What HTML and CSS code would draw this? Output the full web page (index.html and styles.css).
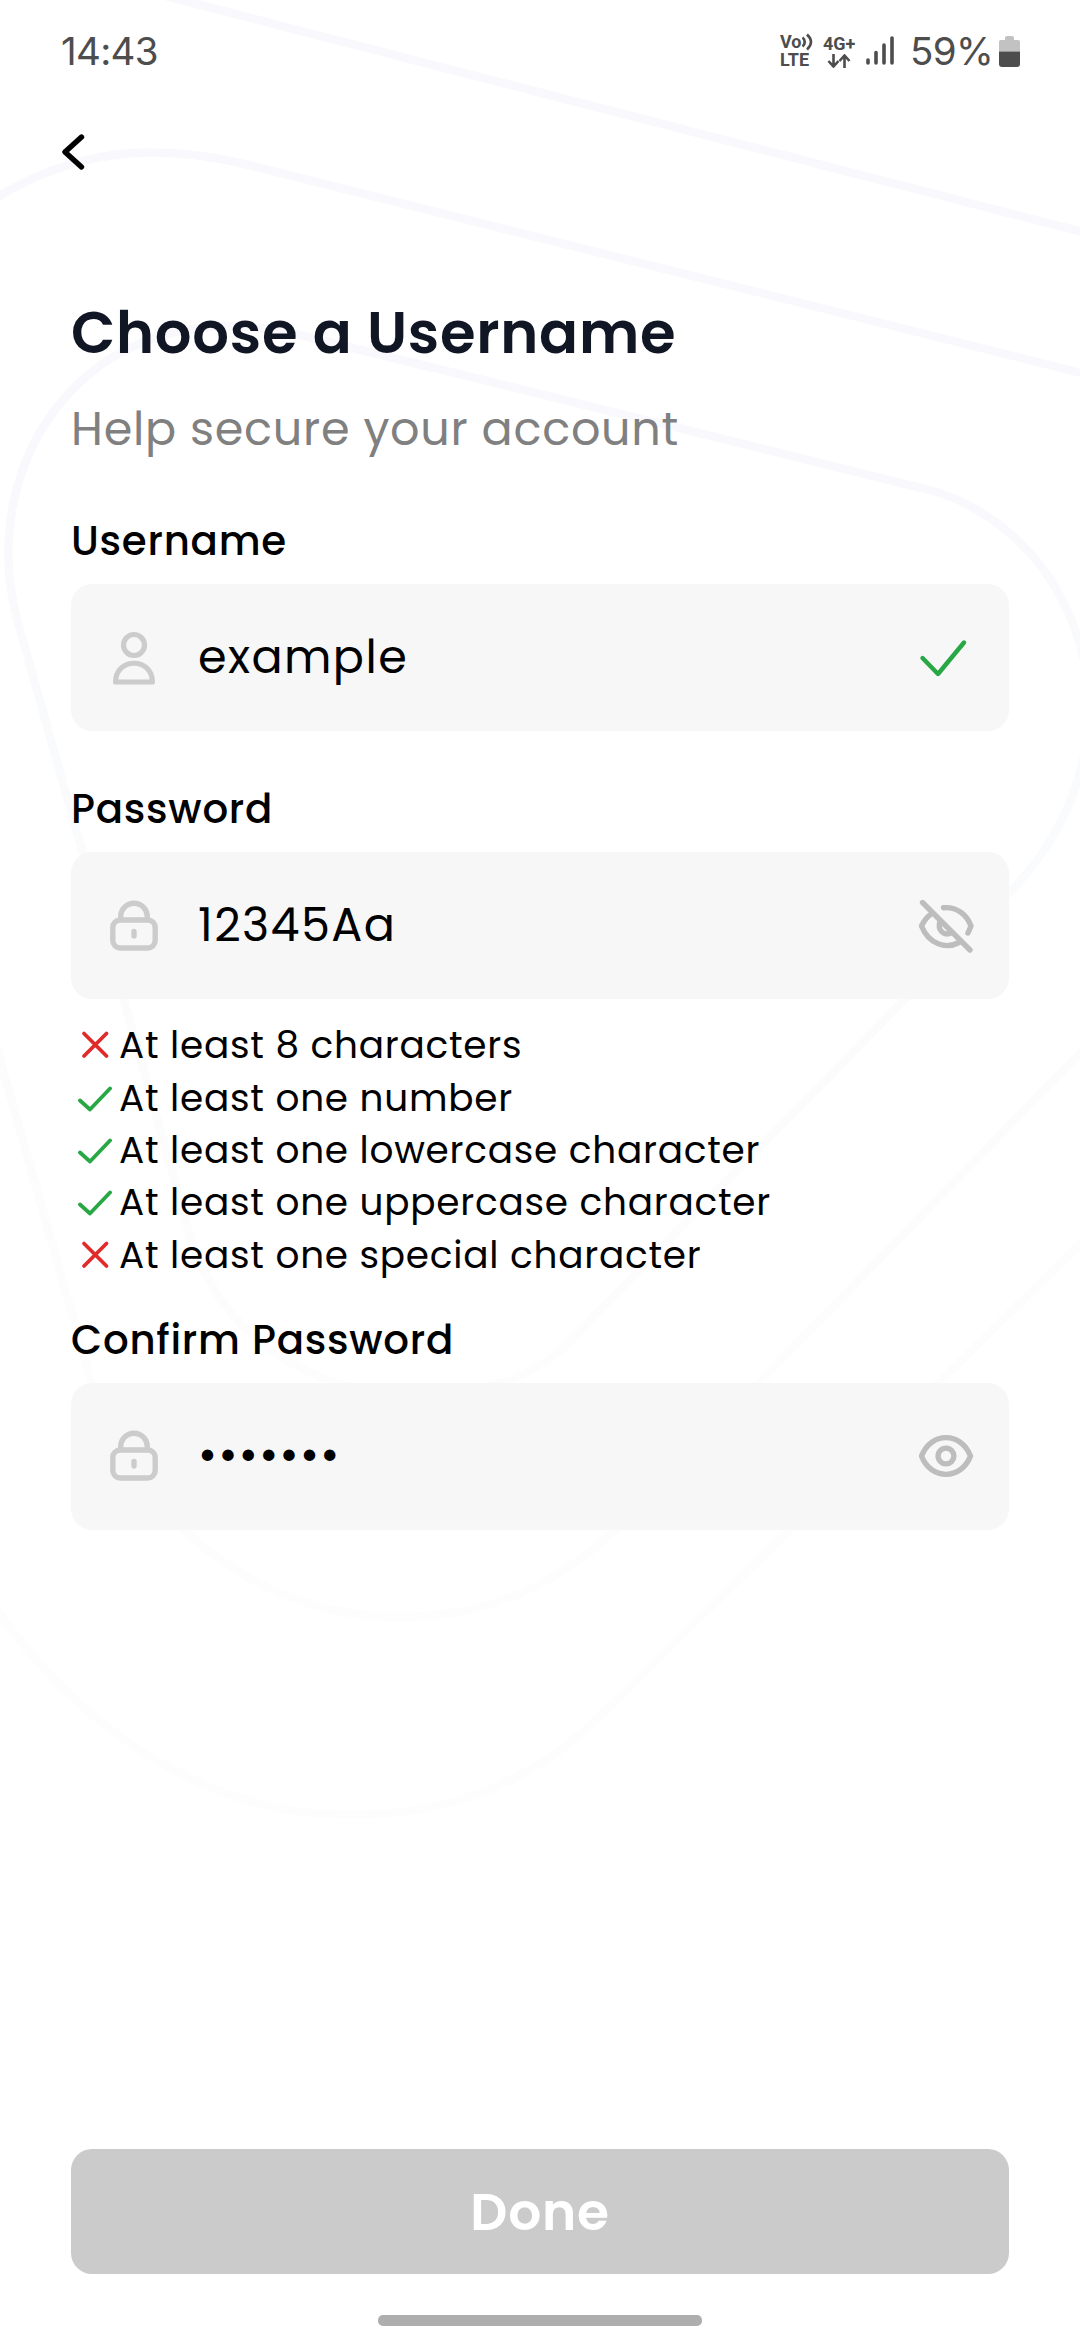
FILE: index.html
```html
<!DOCTYPE html>
<html lang="en">
<head>
<meta charset="utf-8">
<title>Choose a Username</title>
<link rel="stylesheet" href="styles.css">
</head>
<body>
<svg class="backdrop" viewBox="0 0 1080 2340" fill="none" stroke="url(#fade)" stroke-width="8.5">
  <defs>
    <linearGradient id="fade" gradientUnits="userSpaceOnUse" x1="0" y1="0" x2="0" y2="1830">
      <stop offset="0" stop-color="#f8f8fd"/><stop offset=".25" stop-color="#f9f9fd"/>
      <stop offset=".45" stop-color="#fafbfc"/><stop offset=".65" stop-color="#fcfcfc"/>
      <stop offset=".8" stop-color="#fdfdfd"/><stop offset="1" stop-color="#fdfdfd"/>
    </linearGradient>
  </defs>
  <path d="M165-4L1090 234"/>
  <path d="M-4 198C75 150 150 143 240 163L1090 375"/>
  <path d="M-4 1045L90 1378C140 1530 265 1617 399 1617C500 1617 570 1575 620 1525L1084 1049"/>
  <path d="M-4 1609C90 1740 215 1815 351 1815C460 1815 540 1775 600 1716L1084 1240"/>
  <path d="M930 490C992 507 1040 555 1062 600C1115 700 1085 815 1012 890L558 1353C460 1430 240 1410 189 1232L17 619C-25 460 90 285 300 335Z"/>
</svg>
<div class="screen">
  <header class="status">
    <span class="clock">14:43</span>
    <div class="status-icons">
      <div class="volte"><span class="volte-top">Vo<svg width="13" height="18" viewBox="0 0 13 18" fill="none" stroke="#4d4d4d" stroke-width="2.6"><path d="M0.500 4.500q4.500 4.500 0 9M5 1.500q8 7.500 0 15"/></svg></span><span>LTE</span></div>
      <div class="network"><span>4G+</span><svg width="24" height="14" viewBox="0 0 24 14" fill="none" stroke="#4d4d4d" stroke-width="2.6"><path d="M6.500 0v12M1.500 7l5 5.500 5-5.500M17.500 14V2M12.500 7l5-5.500 5 5.500"/></svg></div>
      <svg class="signal" width="30" height="32" viewBox="0 0 30 32" stroke="#4d4d4d" stroke-width="3.6" stroke-linecap="round"><path d="M2 25v3M10 17.500v10.500M18 10v18M26 3v25"/></svg>
      <span class="percent">59%</span>
      <svg class="battery" width="21" height="31" viewBox="0 0 21 31"><path d="M6 2q0-2 2-2h5q2 0 2 2v2h4q2 0 2 2v9.500H0V6q0-2 2-2h4z" fill="#c2c2c2"/><path d="M0 15.500h21V28q0 3-3 3H3q-3 0-3-3z" fill="#4d4d4d"/></svg>
    </div>
  </header>
  <nav class="nav"><svg width="26" height="38" viewBox="0 0 26 38" fill="none" stroke="#000" stroke-width="5.400" stroke-linecap="round" stroke-linejoin="round"><path d="M20.500 4L4 19l16.500 15"/></svg></nav>
  <main class="form">
    <h1 class="title">Choose a Username</h1>
    <p class="subtitle">Help secure your account</p>
    <section class="group">
      <label class="label">Username</label>
      <div class="field">
        <svg class="lead" width="54" height="60" viewBox="0 0 54 60" fill="none" stroke="#ccc" stroke-width="5.200" stroke-linejoin="round"><circle cx="27" cy="17" r="10.500"/><path d="M8.600 54C8.600 29 45.400 29 45.400 54Z"/></svg>
        <span class="value">example</span>
        <svg class="trail" width="60" height="60" viewBox="0 0 60 60" fill="none" stroke="#28a745" stroke-width="4.400" stroke-linecap="round" stroke-linejoin="round"><path d="M6.500 30L22 46 48 14.500"/></svg>
      </div>
    </section>
    <section class="group">
      <label class="label">Password</label>
      <div class="field">
        <svg class="lead" width="54" height="60" viewBox="0 0 54 60" fill="none" stroke="#ccc" stroke-width="5.400"><rect x="5.800" y="24" width="42.400" height="28" rx="7.500"/><path d="M13.700 24v-3.500a13.300 13.300 0 0 1 26.600 0V24"/><path d="M27 35.500v4.500" stroke-linecap="round"/></svg>
        <span class="value">12345Aa</span>
        <svg class="trail" width="60" height="60" viewBox="0 0 60 60" fill="none" stroke="#bdbdbd" stroke-width="5.400" stroke-linecap="round" stroke-linejoin="round"><path d="M6.500 6.500L54 54M27.500 11.700C41 10.500 51 19 55 30L52 37M16 17.500Q9.500 21.500 5.500 30C13 48.500 30 53.500 43 46.500M24 25.500C21 34 28 41 36 36.500"/></svg>
      </div>
    </section>
    <ul class="rules">
      <li class="rule"><svg class="mark" width="41" height="40" viewBox="0 0 41 40" stroke="#e02b2b"><path d="M6 8.500l22.500 22.500M28.500 8.500L6 31"/></svg>At least 8 characters</li>
      <li class="rule"><svg class="mark" width="41" height="40" viewBox="0 0 41 40" stroke="#28a745"><path d="M2 22.500L12 31.500 32 10.500"/></svg>At least one number</li>
      <li class="rule"><svg class="mark" width="41" height="40" viewBox="0 0 41 40" stroke="#28a745"><path d="M2 22.500L12 31.500 32 10.500"/></svg>At least one lowercase character</li>
      <li class="rule"><svg class="mark" width="41" height="40" viewBox="0 0 41 40" stroke="#28a745"><path d="M2 22.500L12 31.500 32 10.500"/></svg>At least one uppercase character</li>
      <li class="rule"><svg class="mark" width="41" height="40" viewBox="0 0 41 40" stroke="#e02b2b"><path d="M6 8.500l22.500 22.500M28.500 8.500L6 31"/></svg>At least one special character</li>
    </ul>
    <section class="group">
      <label class="label">Confirm Password</label>
      <div class="field">
        <svg class="lead" width="54" height="60" viewBox="0 0 54 60" fill="none" stroke="#ccc" stroke-width="5.400"><rect x="5.800" y="24" width="42.400" height="28" rx="7.500"/><path d="M13.700 24v-3.500a13.300 13.300 0 0 1 26.600 0V24"/><path d="M27 35.500v4.500" stroke-linecap="round"/></svg>
        <span class="value">•••••••</span>
        <svg class="trail" width="60" height="60" viewBox="0 0 60 60" fill="none" stroke="#bdbdbd" stroke-width="5.400" stroke-linejoin="round"><path d="M5.500 30C15 5.500 45 5.500 54.500 30C45 54.500 15 54.500 5.500 30Z"/><circle cx="30" cy="30" r="7.900"/></svg>
      </div>
    </section>
  </main>
  <button class="done">Done</button>
  <div class="home-bar"></div>
</div>
</body>
</html>
```
FILE: styles.css
```css
* { box-sizing: border-box; }

body {
  margin: 0;
  background: #fff;
  font-family: Poppins, Inter, "Open Sans", sans-serif;
  letter-spacing: 0.75px;
  color: #000;
}

.backdrop {
  position: absolute;
  inset: 0;
  width: 1080px;
  height: 2340px;
}

.screen {
  position: relative;
  display: flex;
  flex-direction: column;
  width: 1080px;
  height: 2340px;
}

.status {
  display: flex;
  align-items: center;
  justify-content: space-between;
  height: 102px;
  padding: 0 60px 0 61px;
  color: #4d4d4d;
  font-family: Inter, Roboto, sans-serif;
  letter-spacing: 0;
}

.clock,
.percent { font-size: 38.5px; line-height: 46px; letter-spacing: -0.7px; }

.status-icons { display: flex; align-items: center; }

.volte,
.network {
  display: flex;
  flex-direction: column;
  font: 700 18px/18px Roboto, sans-serif;
}

.volte { width: 43px; }
.volte-top { display: flex; }
.network { width: 43px; gap: 1px; }
.network svg { margin-left: 4px; }
.percent { margin-left: 14px; }
.battery { margin-left: 6px; }

.nav { display: flex; padding: 31px 0 0 61px; }

.form { display: flex; flex-direction: column; padding: 122px 71px 0; }

.title {
  margin: 0;
  color: #101623;
  font-size: 57.6px;
  font-weight: 600;
  line-height: 80px;
}

.subtitle {
  margin: 26px 0 57px;
  color: #808080;
  font-size: 46.08px;
  line-height: 60px;
}

.group { display: flex; flex-direction: column; gap: 18px; }
.group + .group { margin-top: 53px; }

.label { font-size: 40.32px; font-weight: 500; line-height: 50px; }

.field {
  display: flex;
  align-items: center;
  height: 147px;
  padding: 0 33px 0 36px;
  border-radius: 21px;
  background: #f7f7f7;
}

.value {
  flex: 1;
  padding: 0 0 2px 37px;
  font-size: 46.08px;
  line-height: 60px;
  letter-spacing: 1.4px;
}

.rules { margin: 20px 0 34px; padding: 0 0 0 7px; list-style: none; }
.rule { display: flex; align-items: center; height: 52.4px; font-size: 37.44px; }

.mark {
  fill: none;
  stroke-width: 3.8;
  stroke-linecap: round;
  stroke-linejoin: round;
}

.done {
  height: 125px;
  margin: auto 71px 41px;
  padding: 2px 0 0;
  border: 0;
  border-radius: 21px;
  background: #cbcbcb;
  color: #fff;
  font: inherit;
  font-size: 51.84px;
  font-weight: 600;
  letter-spacing: 0.75px;
}

.home-bar {
  width: 324px;
  height: 11px;
  margin: 0 auto 14px;
  border-radius: 5px;
  background: #aeaeae;
}
```
